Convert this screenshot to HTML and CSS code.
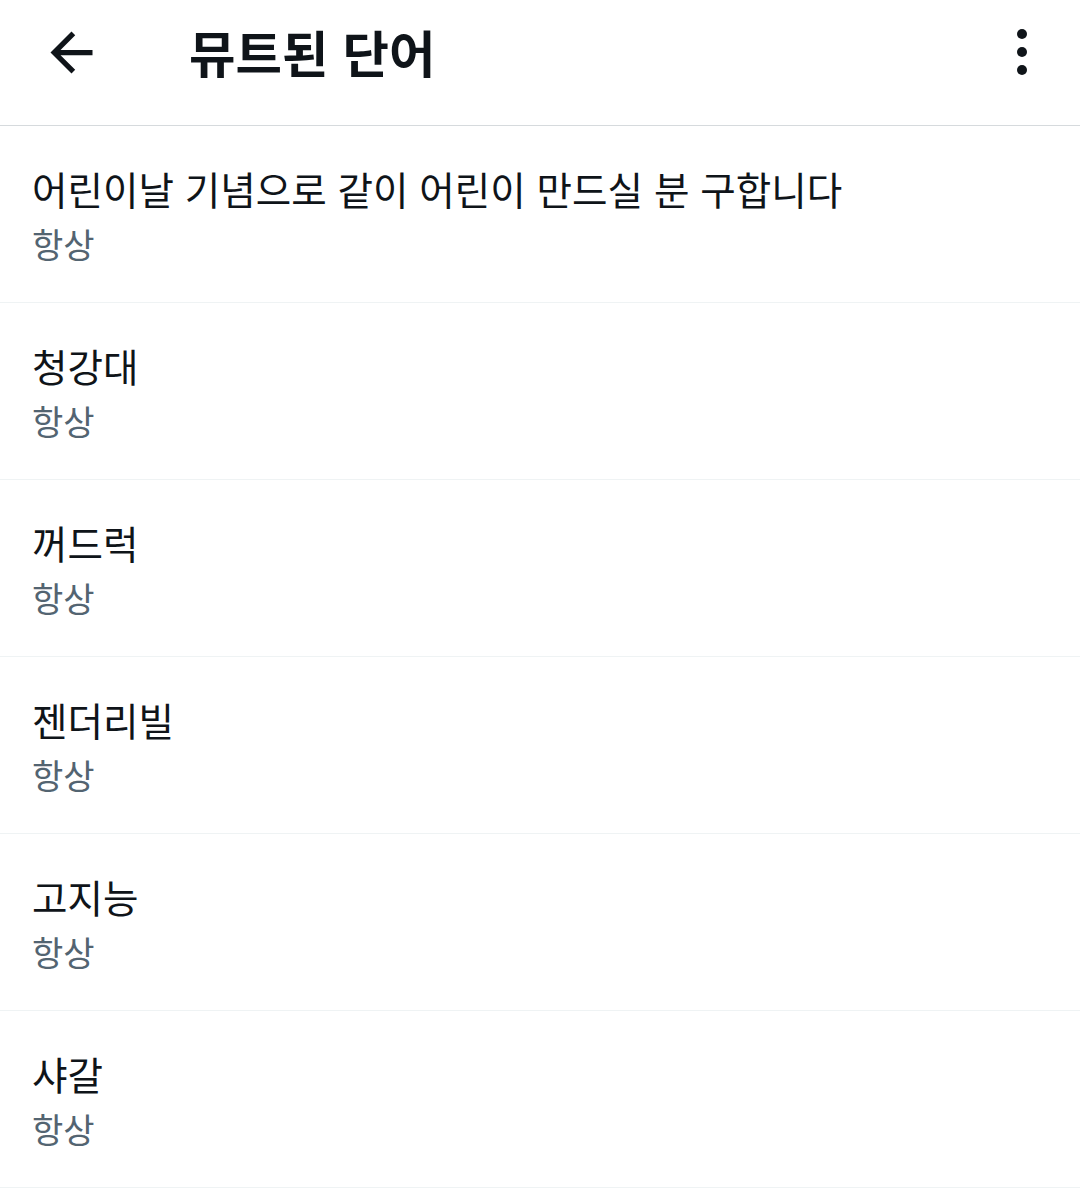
FILE: index.html
```html
<!DOCTYPE html>
<html lang="ko">
<head>
    <meta charset="UTF-8">
    <meta name="viewport" content="width=device-width, initial-scale=1.0">
    <title>뮤트된 단어</title>
    <link rel="stylesheet" href="styles.css">
</head>
<body>
    <header class="topbar">
        <svg class="back" viewBox="0 0 24 24" aria-label="뒤로">
            <path d="M20 11H7.83l5.59-5.59L12 4l-8 8 8 8 1.41-1.41L7.83 13H20v-2z"/>
        </svg>
        <h1 class="title">뮤트된 단어</h1>
        <svg class="more" viewBox="0 0 40 63" aria-label="더보기">
            <circle cx="20" cy="13" r="5"/>
            <circle cx="20" cy="31" r="5"/>
            <circle cx="20" cy="49" r="5"/>
        </svg>
    </header>

    <ul class="word-list">
        <li class="word">
            <div class="word-text">어린이날 기념으로 같이 어린이 만드실 분 구합니다</div>
            <div class="word-meta">항상</div>
        </li>
        <li class="word">
            <div class="word-text">청강대</div>
            <div class="word-meta">항상</div>
        </li>
        <li class="word">
            <div class="word-text">꺼드럭</div>
            <div class="word-meta">항상</div>
        </li>
        <li class="word">
            <div class="word-text">젠더리빌</div>
            <div class="word-meta">항상</div>
        </li>
        <li class="word">
            <div class="word-text">고지능</div>
            <div class="word-meta">항상</div>
        </li>
        <li class="word">
            <div class="word-text">샤갈</div>
            <div class="word-meta">항상</div>
        </li>
    </ul>
</body>
</html>
```

FILE: styles.css
```css
body {
    margin: 0;
    background: #fff;
    color: #0f1419;
    font-family: "Noto Sans CJK KR", "Noto Sans", sans-serif;
}
.topbar {
    display: flex;
    align-items: flex-start;
    height: 104px;
    padding: 21px 38px 0 40px;
    border-bottom: 1px solid #d6dadd;
}
.back {
    width: 63px;
    height: 63px;
    fill: #0f1419;
    flex-shrink: 0;
}
.title {
    margin: 0 0 0 86px;
    font-size: 50.5px;
    font-weight: 700;
    line-height: 60px;
    flex: 1;
}
.more {
    width: 40px;
    height: 63px;
    fill: #0f1419;
}
.word-list {
    list-style: none;
    margin: 0;
    padding: 0;
}
.word {
    padding: 38px 32px 28px;
    border-bottom: 1px solid #eff3f4;
}
.word-text {
    font-size: 38.6px;
    line-height: 48px;
}
.word-meta {
    padding-top: 2px;
    font-size: 34px;
    line-height: 60px;
    color: #536471;
}
```
